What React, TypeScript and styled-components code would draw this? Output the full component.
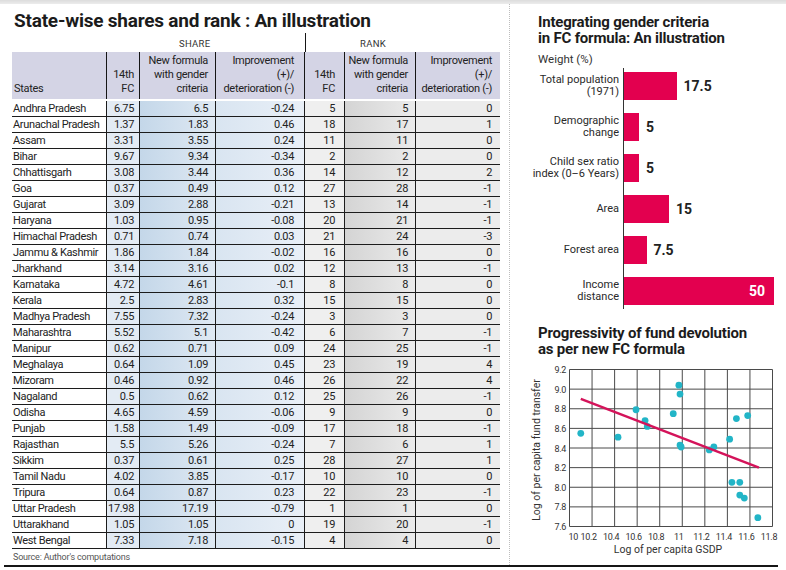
import React from 'react';
import styled, { createGlobalStyle } from 'styled-components';

const NARROW = `Roboto, "Liberation Sans", sans-serif`;
const SANS = `Roboto, "Liberation Sans", sans-serif`;

const GlobalStyle = createGlobalStyle`
  *, *::before, *::after { box-sizing: border-box; }
  html, body { margin: 0; padding: 0; background: #ffffff; }
  body { font-family: ${SANS}; color: #222; }
`;

const Page = styled.div`
  width: 786px;
  height: 570px;
  overflow: hidden;
  display: flex;
  flex-direction: column;
  background: #fff;
`;
const TopBand = styled.div`
  flex: none;
  height: 4px;
  background: linear-gradient(#dcdcdc, #ececec);
`;
const Main = styled.div`
  flex: none;
  display: flex;
  height: 561px;
`;
const LeftPanel = styled.section`
  flex: none;
  width: 510px;
  padding: 6px 0 0 12px;
  border-right: 1px dotted #bdbdbd;
`;
const BottomRule = styled.div`
  flex: none;
  height: 2px;
  margin: 0 8px 0 4px;
  background: #161616;
`;

const Title = styled.h1`
  margin: 0 0 0 2px;
  font-family: ${SANS};
  font-size: 19px;
  line-height: 22px;
  font-weight: 700;
  letter-spacing: -0.22px;
  color: #1b1b1b;
`;

const COLS = '95px 33px 76px 89px 40px 71px 84px';

const Table = styled.div`
  width: 488px;
  font-family: ${NARROW};
  color: #222;
`;
const GroupRow = styled.div`
  display: grid;
  grid-template-columns: ${COLS};
  height: 19px;
  margin-top: 1px;
`;
const GroupLabel = styled.div<{ $col: string; $pad: number; $rule?: boolean }>`
  grid-column: ${(p) => p.$col};
  display: flex;
  align-items: flex-end;
  padding: 0 0 3px ${(p) => p.$pad}px;
  border-left: ${(p) => (p.$rule ? '1px solid #161616' : 'none')};
  font-size: 9.5px;
  line-height: 11px;
  letter-spacing: 0.3px;
  color: #333;
`;
const HeaderRow = styled.div`
  display: grid;
  grid-template-columns: ${COLS};
  height: 49px;
  padding-bottom: 2px;
`;
const HeaderCell = styled.div<{ $align: string; $pad: number; $last?: boolean }>`
  display: flex;
  flex-direction: column;
  justify-content: flex-end;
  align-items: ${(p) => (p.$align === 'left' ? 'flex-start' : 'flex-end')};
  text-align: ${(p) => p.$align};
  padding: 0 ${(p) => (p.$align === 'left' ? 0 : p.$pad)}px 3px ${(p) => (p.$align === 'left' ? p.$pad : 0)}px;
  background: #d4d4e5;
  border-right: ${(p) => (p.$last ? 'none' : '1px solid #161616')};
  font-size: 11px;
  line-height: 14px;
  letter-spacing: -0.3px;
  white-space: nowrap;
`;
const DataRow = styled.div`
  display: grid;
  grid-template-columns: ${COLS};
  height: 16px;
  border-bottom: 1px solid #1c1c1c;
`;
const Cell = styled.div<{ $align: string; $pad: number; $bg: string; $last?: boolean }>`
  background: ${(p) => p.$bg};
  text-align: ${(p) => p.$align};
  padding: 0 ${(p) => (p.$align === 'left' ? 0 : p.$pad)}px 0 ${(p) => (p.$align === 'left' ? p.$pad : 0)}px;
  border-right: ${(p) => (p.$last ? 'none' : '1px solid #1c1c1c')};
  font-size: 11px;
  line-height: 15px;
  letter-spacing: -0.35px;
  white-space: nowrap;
  overflow: hidden;
`;
const Source = styled.p`
  margin: 2px 0 0 1px;
  font-family: ${NARROW};
  font-size: 9px;
  line-height: 12px;
  letter-spacing: -0.2px;
  color: #555;
`;

type ColSpec = { align: 'left' | 'right'; pad: number; bg: string; head: string[] };
const COL_SPECS: ColSpec[] = [
  { align: 'left', pad: 1, bg: '#ffffff', head: ['States'] },
  { align: 'right', pad: 5, bg: '#e3ebf4', head: ['14th', 'FC'] },
  { align: 'right', pad: 7, bg: 'linear-gradient(90deg, #c4d7e9, #dfe9f3)', head: ['New formula', 'with gender', 'criteria'] },
  { align: 'right', pad: 10, bg: 'linear-gradient(90deg, #d9e5f1, #e9eff7)', head: ['Improvement', '(+)/', 'deterioration (-)'] },
  { align: 'right', pad: 9, bg: '#efefef', head: ['14th', 'FC'] },
  { align: 'right', pad: 7, bg: 'linear-gradient(90deg, #d4d4d4, #ebebeb)', head: ['New formula', 'with gender', 'criteria'] },
  { align: 'right', pad: 8, bg: '#ececec', head: ['Improvement', '(+)/', 'deterioration (-)'] },
];

const ROWS: string[][] = [
  ['Andhra Pradesh', '6.75', '6.5', '-0.24', '5', '5', '0'],
  ['Arunachal Pradesh', '1.37', '1.83', '0.46', '18', '17', '1'],
  ['Assam', '3.31', '3.55', '0.24', '11', '11', '0'],
  ['Bihar', '9.67', '9.34', '-0.34', '2', '2', '0'],
  ['Chhattisgarh', '3.08', '3.44', '0.36', '14', '12', '2'],
  ['Goa', '0.37', '0.49', '0.12', '27', '28', '-1'],
  ['Gujarat', '3.09', '2.88', '-0.21', '13', '14', '-1'],
  ['Haryana', '1.03', '0.95', '-0.08', '20', '21', '-1'],
  ['Himachal Pradesh', '0.71', '0.74', '0.03', '21', '24', '-3'],
  ['Jammu & Kashmir', '1.86', '1.84', '-0.02', '16', '16', '0'],
  ['Jharkhand', '3.14', '3.16', '0.02', '12', '13', '-1'],
  ['Karnataka', '4.72', '4.61', '-0.1', '8', '8', '0'],
  ['Kerala', '2.5', '2.83', '0.32', '15', '15', '0'],
  ['Madhya Pradesh', '7.55', '7.32', '-0.24', '3', '3', '0'],
  ['Maharashtra', '5.52', '5.1', '-0.42', '6', '7', '-1'],
  ['Manipur', '0.62', '0.71', '0.09', '24', '25', '-1'],
  ['Meghalaya', '0.64', '1.09', '0.45', '23', '19', '4'],
  ['Mizoram', '0.46', '0.92', '0.46', '26', '22', '4'],
  ['Nagaland', '0.5', '0.62', '0.12', '25', '26', '-1'],
  ['Odisha', '4.65', '4.59', '-0.06', '9', '9', '0'],
  ['Punjab', '1.58', '1.49', '-0.09', '17', '18', '-1'],
  ['Rajasthan', '5.5', '5.26', '-0.24', '7', '6', '1'],
  ['Sikkim', '0.37', '0.61', '0.25', '28', '27', '1'],
  ['Tamil Nadu', '4.02', '3.85', '-0.17', '10', '10', '0'],
  ['Tripura', '0.64', '0.87', '0.23', '22', '23', '-1'],
  ['Uttar Pradesh', '17.98', '17.19', '-0.79', '1', '1', '0'],
  ['Uttarakhand', '1.05', '1.05', '0', '19', '20', '-1'],
  ['West Bengal', '7.33', '7.18', '-0.15', '4', '4', '0'],
];

/* ---------- right panel ---------- */
const RightPanel = styled.section`
  flex: 1;
  padding: 10px 0 0 28px;
  font-family: ${SANS};
`;
const ChartTitle = styled.h2<{ $top: number }>`
  margin: ${(p) => p.$top}px 0 0;
  font-size: 15px;
  line-height: 16px;
  font-weight: 700;
  letter-spacing: -0.2px;
  color: #1c1c1c;
`;
const UnitLabel = styled.div`
  margin-top: 6px;
  font-size: 11.5px;
  line-height: 14px;
  color: #333;
`;
const BarChart = styled.div`
  margin-top: 2px;
  display: flex;
  flex-direction: column;
`;
const BarRow = styled.div`
  display: flex;
`;
const BarLabel = styled.div<{ $last?: boolean }>`
  flex: none;
  width: 81px;
  margin-right: 4px;
  padding: 4px 0 ${(p) => (p.$last ? 4 : 9)}px;
  display: flex;
  align-items: center;
  justify-content: flex-end;
  text-align: right;
  font-size: 11px;
  line-height: 12px;
  color: #2a2a2a;
  white-space: nowrap;
`;
const BarTrack = styled.div<{ $last?: boolean }>`
  flex: 1;
  display: flex;
  align-items: center;
  padding: 4px 0 ${(p) => (p.$last ? 4 : 9)}px;
  border-left: 1px solid #333;
`;
const Bar = styled.div`
  flex: none;
  height: 28px;
  background: #e3004f;
  display: flex;
  align-items: center;
  justify-content: flex-end;
`;
const BarValue = styled.span<{ $inside?: boolean }>`
  margin-left: ${(p) => (p.$inside ? 0 : 7)}px;
  padding-right: ${(p) => (p.$inside ? 9 : 0)}px;
  font-size: 14px;
  font-weight: 700;
  color: ${(p) => (p.$inside ? '#ffffff' : '#222')};
`;

const BARS: { label: string[]; value: number }[] = [
  { label: ['Total population', '(1971)'], value: 17.5 },
  { label: ['Demographic', 'change'], value: 5 },
  { label: ['Child sex ratio', 'index (0–6 Years)'], value: 5 },
  { label: ['Area'], value: 15 },
  { label: ['Forest area'], value: 7.5 },
  { label: ['Income', 'distance'], value: 50 },
];
const BAR_SCALE = 3;

const Scatter = styled.svg`
  display: block;
  margin: 1px 0 0 -18px;
  overflow: visible;
`;
const TickText = styled.text`
  font-family: ${SANS};
  font-size: 9px;
  letter-spacing: -0.3px;
  fill: #333;
`;
const AxisTitle = styled.text`
  font-family: ${SANS};
  font-size: 10.5px;
  fill: #333;
`;

const X0 = 49.5;
const X1 = 252.5;
const Y0 = 11.5;
const Y1 = 168.5;
const sx = (v: number) => X0 + ((v - 10) / 1.8) * (X1 - X0);
const sy = (v: number) => Y0 + ((9.2 - v) / 1.6) * (Y1 - Y0);
const XT = Array.from({ length: 10 }, (_, i) => 10 + i * 0.2);
const YT = Array.from({ length: 9 }, (_, i) => 9.2 - i * 0.2);
const POINTS: [number, number][] = [
  [10.1, 8.55], [10.43, 8.51], [10.59, 8.79], [10.67, 8.68], [10.69, 8.62],
  [10.92, 8.75], [10.97, 9.04], [10.98, 8.95], [10.98, 8.43], [10.99, 8.41],
  [11.24, 8.38], [11.28, 8.41], [11.42, 8.49], [11.48, 8.7], [11.58, 8.73],
  [11.44, 8.05], [11.51, 8.05], [11.51, 7.92], [11.55, 7.89], [11.67, 7.69],
];
const TREND: [number, number][] = [[10.1, 8.9], [11.68, 8.2]];

function ScatterChart() {
  return (
    <Scatter width={260} height={200} viewBox="0 0 260 200">
      {XT.map((v, i) => (
        <line key={`gx${i}`} x1={sx(v)} x2={sx(v)} y1={Y0} y2={Y1} stroke="#4a4a4a" strokeWidth={1} />
      ))}
      {YT.map((v, i) => (
        <line key={`gy${i}`} x1={X0} x2={X1} y1={sy(v)} y2={sy(v)} stroke="#4a4a4a" strokeWidth={1} />
      ))}
      {YT.map((v, i) => (
        <TickText key={`ty${i}`} x={46} y={sy(v) + 3.5} textAnchor="end">
          {v.toFixed(1)}
        </TickText>
      ))}
      {XT.map((v, i) => {
        const label = i === 0 ? '10' : i === 5 ? '11' : v.toFixed(1);
        return (
          <TickText
            key={`tx${i}`}
            x={i === 0 ? sx(v) - 1 : sx(v) - 3.5}
            y={181.5}
            textAnchor={i === 0 ? 'start' : 'middle'}
          >
            {label}
          </TickText>
        );
      })}
      {POINTS.map(([x, y], i) => (
        <circle key={`p${i}`} cx={sx(x)} cy={sy(y)} r={3.4} fill="#22b5c7" />
      ))}
      <line
        x1={sx(TREND[0][0])}
        y1={sy(TREND[0][1])}
        x2={sx(TREND[1][0])}
        y2={sy(TREND[1][1])}
        stroke="#d4135a"
        strokeWidth={2.5}
      />
      <AxisTitle x={148} y={195} textAnchor="middle">Log of per capita GSDP</AxisTitle>
      <AxisTitle x={20} y={92} textAnchor="middle" transform="rotate(-90 20 92)">
        Log of per capita fund transfer
      </AxisTitle>
    </Scatter>
  );
}

export default function App() {
  return (
    <>
      <GlobalStyle />
      <Page>
        <TopBand />
        <Main>
          <LeftPanel>
            <Title>State-wise shares and rank : An illustration</Title>
            <Table>
              <GroupRow>
                <GroupLabel $col="2 / 5" $pad={72}>SHARE</GroupLabel>
                <GroupLabel $col="5 / 8" $pad={54} $rule>RANK</GroupLabel>
              </GroupRow>
              <HeaderRow>
                {COL_SPECS.map((c, i) => (
                  <HeaderCell key={i} $align={c.align} $pad={c.align === 'left' ? 2 : c.pad} $last={i === COL_SPECS.length - 1}>
                    {c.head.map((h) => (
                      <span key={h}>{h}</span>
                    ))}
                  </HeaderCell>
                ))}
              </HeaderRow>
              {ROWS.map((r) => (
                <DataRow key={r[0]}>
                  {r.map((v, i) => (
                    <Cell
                      key={i}
                      $align={COL_SPECS[i].align}
                      $pad={COL_SPECS[i].pad}
                      $bg={COL_SPECS[i].bg}
                      $last={i === r.length - 1}
                    >
                      {v}
                    </Cell>
                  ))}
                </DataRow>
              ))}
            </Table>
            <Source>Source: Author's computations</Source>
          </LeftPanel>
          <RightPanel>
            <ChartTitle $top={0}>
              Integrating gender criteria
              <br />
              in FC formula: An illustration
            </ChartTitle>
            <UnitLabel>Weight (%)</UnitLabel>
            <BarChart>
              {BARS.map((b, i) => {
                const last = i === BARS.length - 1;
                const inside = b.value >= 40;
                return (
                  <BarRow key={b.label.join(' ')}>
                    <BarLabel $last={last}>
                      <span>
                        {b.label.map((l, j) => (
                          <React.Fragment key={l}>
                            {j > 0 && <br />}
                            {l}
                          </React.Fragment>
                        ))}
                      </span>
                    </BarLabel>
                    <BarTrack $last={last}>
                      <Bar style={{ width: `${b.value * BAR_SCALE}px` }}>
                        {inside && <BarValue $inside>{b.value}</BarValue>}
                      </Bar>
                      {!inside && <BarValue>{b.value}</BarValue>}
                    </BarTrack>
                  </BarRow>
                );
              })}
            </BarChart>
            <ChartTitle $top={16}>
              Progressivity of fund devolution
              <br />
              as per new FC formula
            </ChartTitle>
            <ScatterChart />
          </RightPanel>
        </Main>
        <BottomRule />
      </Page>
    </>
  );
}
